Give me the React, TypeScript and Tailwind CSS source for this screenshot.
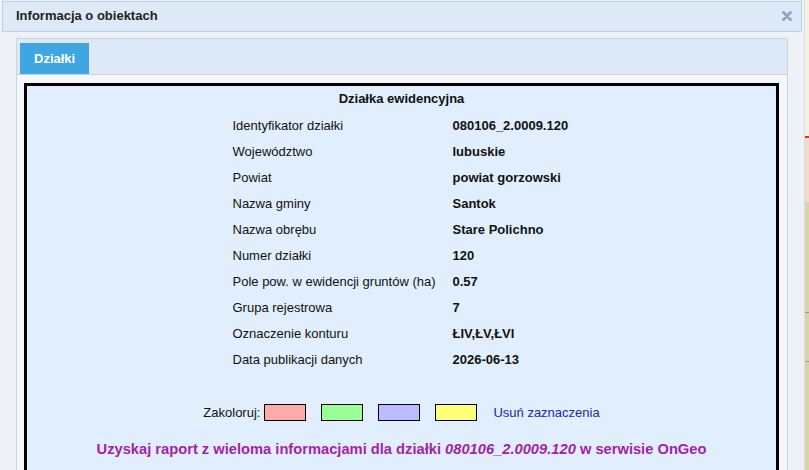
const rows: [string, string][] = [
  ["Identyfikator działki", "080106_2.0009.120"],
  ["Województwo", "lubuskie"],
  ["Powiat", "powiat gorzowski"],
  ["Nazwa gminy", "Santok"],
  ["Nazwa obrębu", "Stare Polichno"],
  ["Numer działki", "120"],
  ["Pole pow. w ewidencji gruntów (ha)", "0.57"],
  ["Grupa rejestrowa", "7"],
  ["Oznaczenie konturu", "ŁIV,ŁV,ŁVI"],
  ["Data publikacji danych", "2026-06-13"],
];

const swatches = ["bg-[#ffaaaa]", "bg-[#99ff99]", "bg-[#bbbbff]", "bg-[#ffff77]"];

export default function App() {
  return (
    <div className="w-[809px] h-[470px] flex overflow-hidden bg-[#eef2f7] font-['Liberation_Sans',Arial,sans-serif] text-[13px] text-[#111]">
      {/* dialog */}
      <div className="w-[805px] flex flex-col border-r border-[#d6dde4]">
        <div className="mx-[2px] mt-[1px] h-[31px] border border-[#b9d0e6] bg-[#dde9f6] flex items-center justify-between pl-[13px] pr-[9px] pb-[1px]">
          <span className="font-bold text-[#222]">Informacja o obiektach</span>
          <svg width="10" height="10" viewBox="0 0 10 10">
            <path d="M1.5 1.5 L8.5 8.5 M8.5 1.5 L1.5 8.5" stroke="#8aa4bf" strokeWidth="2.8" strokeLinecap="round" />
          </svg>
        </div>

        <div className="flex-1 px-[16px] pt-[6px]">
          <div className="h-full border border-b-0 border-[#c8d5e2] bg-[#f5f8fb] flex flex-col">
            <div className="h-[36px] bg-[#dde9f6] border-b border-[#c5d4e2] flex items-end pl-[3px]">
              <div className="h-[31px] px-[14px] bg-[#40a6e2] text-white font-bold flex items-center">
                Działki
              </div>
            </div>

            <div className="flex-1 pl-[7px] pr-[8px] pt-[8px]">
              <div className="h-full border-[3px] border-black border-b-0 bg-[#e1eefd] flex flex-col items-center pt-[5px]">
                <div className="font-bold leading-[16px]">Działka ewidencyjna</div>

                <div className="mt-[6px] w-[340px] ml-[2px] grid grid-cols-[220px_1fr]">
                  {rows.map(([label, value]) => (
                    <div key={label} className="contents">
                      <div className="h-[26px] flex items-center">{label}</div>
                      <div className="h-[26px] flex items-center font-bold">{value}</div>
                    </div>
                  ))}
                </div>

                <div className="mt-[30px] flex items-center gap-[15px]">
                  <div className="flex items-center gap-[4px]">
                    <span>Zakoloruj:</span>
                    <span className={`w-[42px] h-[17px] border border-black ${swatches[0]}`} />
                  </div>
                  <span className={`w-[42px] h-[17px] border border-black ${swatches[1]}`} />
                  <span className={`w-[42px] h-[17px] border border-black ${swatches[2]}`} />
                  <span className={`w-[42px] h-[17px] border border-black ${swatches[3]}`} />
                  <span className="text-[#2323b8] ml-[1px]">Usuń zaznaczenia</span>
                </div>

                <div className="mt-[15px] font-bold text-[14.7px] text-[#a41fa8]">
                  Uzyskaj raport z wieloma informacjami dla działki <i>080106_2.0009.120</i> w serwisie OnGeo
                </div>
              </div>
            </div>
          </div>
        </div>
      </div>

      {/* map behind the dialog */}
      <div className="w-[4px] flex flex-col">
        <div className="h-[136px] bg-[#f3f1e3]" />
        <div className="h-[2px] bg-[#e53030]" />
        <div className="h-[64px] bg-[#f1dcc9]" />
        <div className="h-[110px] bg-[#d9d4a5]" />
        <div className="h-px bg-[#999]" />
        <div className="h-[48px] bg-[#d9d4a5]" />
        <div className="h-px bg-[#999]" />
        <div className="flex-1 bg-[#d9d4a5]" />
      </div>
    </div>
  );
}
